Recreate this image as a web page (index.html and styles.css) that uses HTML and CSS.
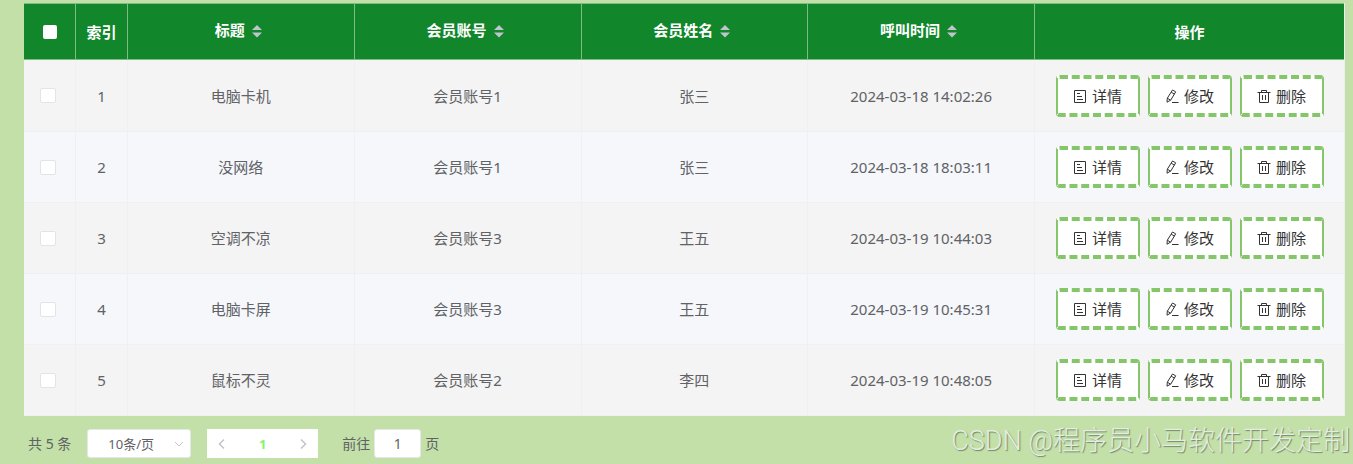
FILE: index.html
```html
<!DOCTYPE html>
<html lang="zh-CN">
<head>
<meta charset="utf-8">
<title>呼叫管理</title>
<link rel="stylesheet" href="styles.css">
</head>
<body>
<svg class="sprite" aria-hidden="true">
  <symbol id="sort" viewBox="0 0 10 14"><path d="M5 1 10 6H0ZM0 8.500H10L5 13.500Z" fill="#c0c4cc"/></symbol>
  <symbol id="detail" viewBox="0 0 14 14"><path d="M1.500 1.500h11v12h-11zM4 4.500h3M4 7.500h5M4 10.500h6" fill="none" stroke="currentColor"/></symbol>
  <symbol id="edit" viewBox="0 0 14 14"><path d="M7.500 1 10.700 2.800 5.800 11 2 13.200 2.300 9.200ZM6.200 3.200 9.400 5.100M2.300 9.200 5.600 11.200M7 13.500h6.500" fill="none" stroke="currentColor"/></symbol>
  <symbol id="trash" viewBox="0 0 14 14"><path d="M.5 3.500h13M4.500 3.500v-2h5v2M2.500 3.500v10h9v-10M5.500 6v5M8.500 6v5" fill="none" stroke="currentColor"/></symbol>
  <symbol id="left" viewBox="0 0 12 12"><path d="M8 1.500 3.500 6 8 10.500" fill="none" stroke="#c0c4cc" stroke-width="1.500"/></symbol>
  <symbol id="right" viewBox="0 0 12 12"><path d="M4 1.500 8.500 6 4 10.500" fill="none" stroke="#c0c4cc" stroke-width="1.500"/></symbol>
  <symbol id="down" viewBox="0 0 12 12"><path d="M2 4 6 8 10 4" fill="none" stroke="#c0c4cc"/></symbol>
</svg>
<main class="page">
  <table class="grid">
    <colgroup><col class="c-small"><col class="c-small"><col><col><col><col><col class="c-ops"></colgroup>
    <thead>
      <tr>
        <th><input class="check" type="checkbox" aria-label="全选"></th>
        <th>索引</th>
        <th class="sortable"><span>标题</span><svg class="sort"><use href="#sort"/></svg></th>
        <th class="sortable"><span>会员账号</span><svg class="sort"><use href="#sort"/></svg></th>
        <th class="sortable"><span>会员姓名</span><svg class="sort"><use href="#sort"/></svg></th>
        <th class="sortable"><span>呼叫时间</span><svg class="sort"><use href="#sort"/></svg></th>
        <th>操作</th>
      </tr>
    </thead>
    <tbody>
      <tr><td><input class="check" type="checkbox" aria-label="选择 1"></td><td>1</td><td>电脑卡机</td><td>会员账号1</td><td>张三</td><td>2024-03-18 14:02:26</td>
        <td><div class="ops"><button class="op" type="button"><svg><use href="#detail"/></svg>详情</button><button class="op" type="button"><svg><use href="#edit"/></svg>修改</button><button class="op" type="button"><svg><use href="#trash"/></svg>删除</button></div></td></tr>
      <tr><td><input class="check" type="checkbox" aria-label="选择 2"></td><td>2</td><td>没网络</td><td>会员账号1</td><td>张三</td><td>2024-03-18 18:03:11</td>
        <td><div class="ops"><button class="op" type="button"><svg><use href="#detail"/></svg>详情</button><button class="op" type="button"><svg><use href="#edit"/></svg>修改</button><button class="op" type="button"><svg><use href="#trash"/></svg>删除</button></div></td></tr>
      <tr><td><input class="check" type="checkbox" aria-label="选择 3"></td><td>3</td><td>空调不凉</td><td>会员账号3</td><td>王五</td><td>2024-03-19 10:44:03</td>
        <td><div class="ops"><button class="op" type="button"><svg><use href="#detail"/></svg>详情</button><button class="op" type="button"><svg><use href="#edit"/></svg>修改</button><button class="op" type="button"><svg><use href="#trash"/></svg>删除</button></div></td></tr>
      <tr><td><input class="check" type="checkbox" aria-label="选择 4"></td><td>4</td><td>电脑卡屏</td><td>会员账号3</td><td>王五</td><td>2024-03-19 10:45:31</td>
        <td><div class="ops"><button class="op" type="button"><svg><use href="#detail"/></svg>详情</button><button class="op" type="button"><svg><use href="#edit"/></svg>修改</button><button class="op" type="button"><svg><use href="#trash"/></svg>删除</button></div></td></tr>
      <tr><td><input class="check" type="checkbox" aria-label="选择 5"></td><td>5</td><td>鼠标不灵</td><td>会员账号2</td><td>李四</td><td>2024-03-19 10:48:05</td>
        <td><div class="ops"><button class="op" type="button"><svg><use href="#detail"/></svg>详情</button><button class="op" type="button"><svg><use href="#edit"/></svg>修改</button><button class="op" type="button"><svg><use href="#trash"/></svg>删除</button></div></td></tr>
    </tbody>
  </table>
  <nav class="pager" aria-label="分页">
    <span>共 5 条</span>
    <div class="size">
      <select aria-label="每页条数"><option>10条/页</option><option>20条/页</option></select>
      <svg class="caret"><use href="#down"/></svg>
    </div>
    <div class="pages">
      <button type="button" aria-label="上一页" disabled><svg><use href="#left"/></svg></button>
      <button type="button" class="current">1</button>
      <button type="button" aria-label="下一页" disabled><svg><use href="#right"/></svg></button>
    </div>
    <label class="jump">前往 <input type="text" value="1"> 页</label>
  </nav>
</main>
<div class="watermark">CSDN @程序员小马软件开发定制</div>
</body>
</html>
```
FILE: styles.css
```css
* { box-sizing: border-box; }
body {
  margin: 0;
  min-height: 100vh;
  position: relative;
  overflow: hidden;
  background: #c2e0a8;
  color: #606266;
  font: 15px/20px "Noto Sans", "Noto Sans CJK SC", sans-serif;
}
.sprite { display: none; }
.page { padding: 3px 8px 0 24px; }
.grid {
  width: 100%;
  table-layout: fixed;
  border-collapse: separate;
  border-spacing: 0;
  border-right: 1px solid #ebeef5;
}
.c-small { width: 52px; }
.c-ops { width: 309px; }
th, td {
  padding: 0;
  text-align: center;
  vertical-align: middle;
  border-right: 1px solid #eef0f4;
  border-bottom: 1px solid #eef0f4;
}
th:last-child, td:last-child { border-right: 0; }
th {
  height: 57px;
  background: #11862b;
  color: #fff;
  font-weight: 700;
  border-top: 1px solid #7bbd83;
  border-color: #7bbd83;
}
td { height: 71px; background: #f4f4f4; }
tbody tr:first-child td { height: 72px; }
tbody tr:nth-child(even) td { background: #f5f7fb; }
.sortable { padding-bottom: 4px; }
.sort { width: 10px; height: 14px; margin: 0 5px 0 7px; vertical-align: -2px; }
.check {
  appearance: none;
  display: block;
  width: 16px;
  height: 15px;
  margin: 0 auto 0 16px;
  border: 1px solid #e1e4ea;
  border-radius: 2px;
  background: #fff;
}
th .check { width: 14px; height: 14px; margin: 0 auto; border: 0; }
.ops { display: flex; justify-content: center; gap: 8px; }
.op {
  display: flex;
  align-items: center;
  justify-content: center;
  gap: 5px;
  width: 84px;
  height: 42px;
  padding: 0;
  background: #fff;
  color: #333;
  font: inherit;
  border: 4px dashed #85c66b;
  border-width: 4px 2px;
  border-style: dashed solid;
  border-radius: 4px;
}
.op svg { width: 14px; height: 14px; }
.pager {
  display: flex;
  align-items: center;
  padding: 13px 4px 6px;
  font-size: 14px;
}
.size { position: relative; margin: 0 16px; }
.size select {
  appearance: none;
  display: block;
  width: 104px;
  height: 29px;
  padding: 0 20px;
  border: 1px solid #e4e8e8;
  border-radius: 3px;
  background: #fff;
  color: #606266;
  font: 13px/20px "Noto Sans", "Noto Sans CJK SC", sans-serif;
}
.caret { position: absolute; right: 6px; top: 9px; width: 12px; height: 12px; pointer-events: none; }
.pages { display: flex; margin-right: 24px; background: #fff; }
.pages button {
  display: grid;
  place-items: center;
  width: 30px;
  height: 29px;
  padding: 0;
  border: 0;
  background: #fff;
  font: inherit;
}
.pages svg { width: 12px; height: 12px; }
.pages .current { width: 51px; color: #85f56b; font-weight: 700; font-size: 13px; }
.jump { display: flex; align-items: center; gap: 4px; }
.jump input {
  width: 47px;
  height: 29px;
  padding: 0;
  border: 1px solid #e4e8e8;
  border-radius: 3px;
  background: #fff;
  color: #606266;
  font: inherit;
  text-align: center;
}
.watermark {
  position: absolute;
  right: 3px;
  bottom: 5px;
  color: #e4ede0;
  font: 300 27px/36px Roboto, "Noto Sans CJK SC", sans-serif;
  text-shadow: 1px 1px 1px #71866a;
  white-space: nowrap;
  pointer-events: none;
}
```
